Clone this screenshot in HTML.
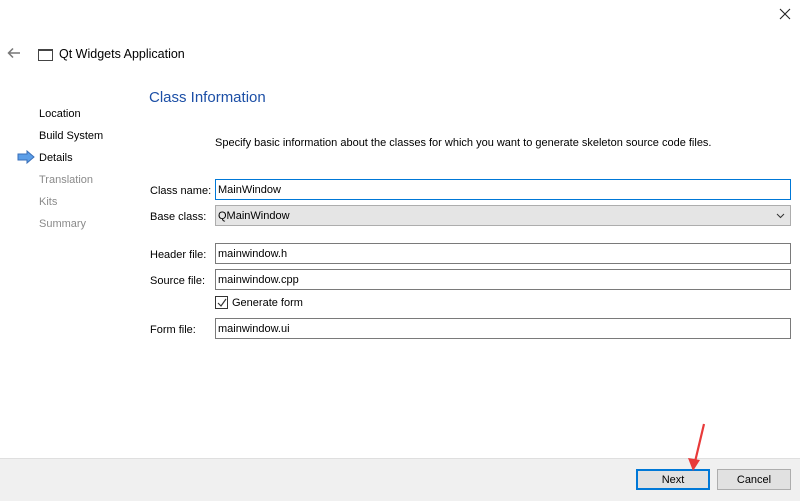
<!DOCTYPE html><html><head><style>
body{margin:0;width:800px;height:500px;background:#fff;font-family:"Liberation Sans",sans-serif;font-size:11px;color:#000;position:relative;overflow:hidden}
.a{position:absolute;white-space:nowrap}
.f{position:absolute;left:215px;width:576px;height:21px;border:1px solid #7a7a7a;background:#fff;box-sizing:border-box;line-height:21px;padding-left:2px}
.b{position:absolute;top:469px;height:21px;border:1px solid #adadad;background:#e1e1e1;text-align:center;line-height:21px;width:74px;box-sizing:border-box}
.g{color:#8a8a8a}
</style></head><body>
<svg class="a" style="left:779px;top:8px" width="12" height="12"><path d="M1 1l10 10M11 1L1 11" stroke="#222" stroke-width="1.1"/></svg>
<svg class="a" style="left:7px;top:47px" width="14" height="12"><path d="M13 6H2M6 1.5L1.5 6 6 10.5" fill="none" stroke="#777" stroke-width="1.5"/></svg>
<div class="a" style="left:38px;top:49px;width:13px;height:9px;border:1px solid #444;border-top-width:2px"></div>
<div class="a" style="left:59px;top:47px;font-size:12.5px">Qt Widgets Application</div>
<div class="a" style="left:149px;top:89px;font-size:15px;color:#1c4fa6">Class Information</div>
<div class="a" style="left:39px;top:108px">Location</div>
<div class="a" style="left:39px;top:130px">Build System</div>
<svg class="a" style="left:17px;top:150px" width="18" height="14"><path d="M1 4h9V1l7 6-7 6V10H1z" fill="#5b9ee8" stroke="#3a6fb8"/></svg>
<div class="a" style="left:39px;top:152px">Details</div>
<div class="a g" style="left:39px;top:174px">Translation</div>
<div class="a g" style="left:39px;top:196px">Kits</div>
<div class="a g" style="left:39px;top:218px">Summary</div>
<div class="a" style="left:215px;top:137px">Specify basic information about the classes for which you want to generate skeleton source code files.</div>
<div class="a" style="left:150px;top:185px">Class name:</div>
<div class="f" style="top:179px;border-color:#0078d7">MainWindow</div>
<div class="a" style="left:150px;top:211px">Base class:</div>
<div class="f" style="top:205px;background:#e5e5e5;border-color:#adadad">QMainWindow<svg style="position:absolute;right:5px;top:7px" width="9" height="6"><path d="M1 1l3.5 3.5L8 1" fill="none" stroke="#333"/></svg></div>
<div class="a" style="left:150px;top:249px">Header file:</div>
<div class="f" style="top:243px">mainwindow.h</div>
<div class="a" style="left:150px;top:275px">Source file:</div>
<div class="f" style="top:269px">mainwindow.cpp</div>
<div class="a" style="left:215px;top:296px;width:11px;height:11px;border:1px solid #333"></div>
<svg class="a" style="left:216px;top:297px" width="12" height="12"><path d="M2 6l3 3 5-7" fill="none" stroke="#333" stroke-width="1.2"/></svg>
<div class="a" style="left:232px;top:297px">Generate form</div>
<div class="a" style="left:150px;top:324px">Form file:</div>
<div class="f" style="top:318px">mainwindow.ui</div>
<div class="a" style="left:0;top:458px;width:800px;height:42px;background:#f0f0f0;border-top:1px solid #dfdfdf"></div>
<div class="b" style="left:636px;border:2px solid #0078d7;line-height:19px">Next</div>
<div class="b" style="left:717px">Cancel</div>
<svg class="a" style="left:680px;top:420px" width="30" height="55"><path d="M24 4L14 46" stroke="#e83a3a" stroke-width="2.2"/><path d="M8 38l5 13 7-11z" fill="#e83a3a"/></svg>
</body></html>
